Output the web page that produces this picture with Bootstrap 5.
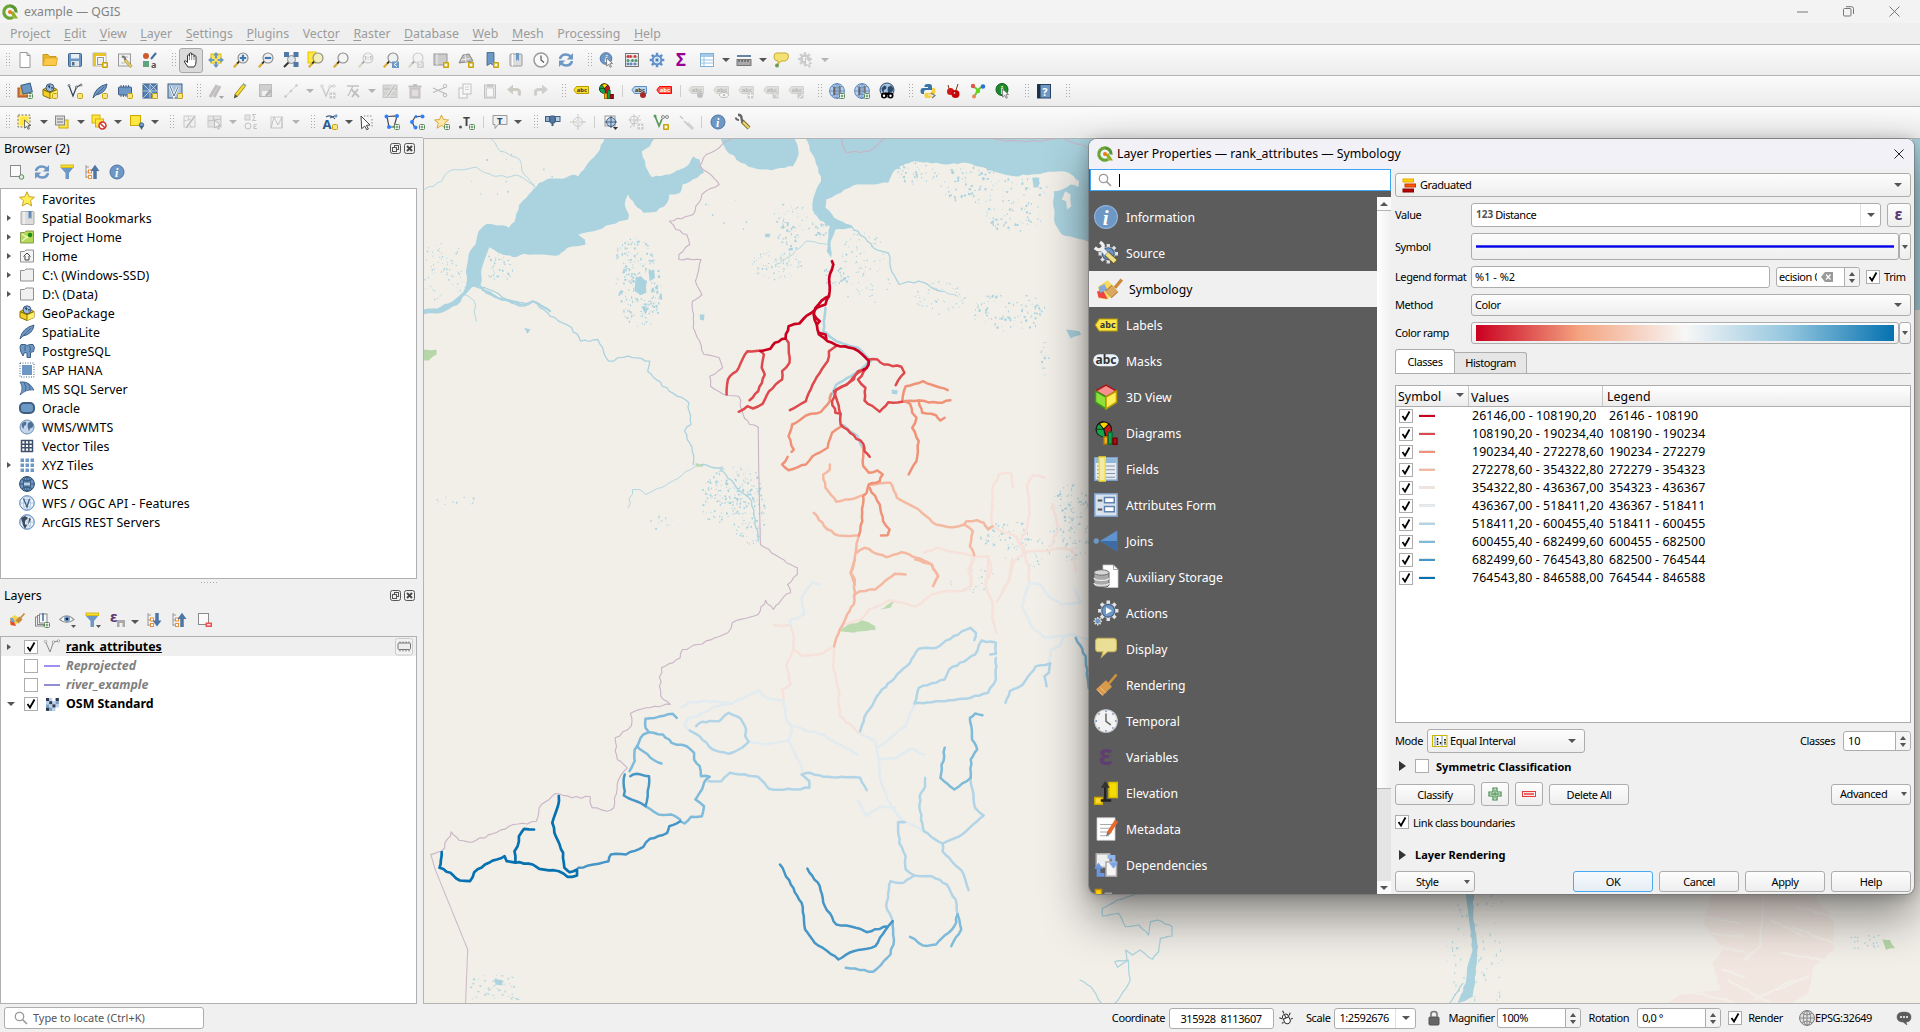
<!DOCTYPE html>
<html lang="en">
<head>
<meta charset="utf-8">
<title>example — QGIS</title>
<link href="https://cdn.jsdelivr.net/npm/bootstrap@5.3.0/dist/css/bootstrap.min.css" rel="stylesheet">
<style>
html,body{height:100%;overflow:hidden}
body{font:12.4px/18px "Noto Sans",sans-serif;color:#000;background:#f0f0f0;cursor:default}
svg{display:block;flex:none}
svg.ic{width:16px;height:16px;overflow:visible}
.titlebar{height:23px;background:#f3f3f3;color:#838383;padding-left:2px;font-size:12.2px}
.winbtns{gap:35px;padding-right:20px;color:#777}
.menubar{height:21px;padding-left:10px;gap:13.5px;color:#9b9b9b;line-height:22px;background:#efefef}
.menubar u{text-underline-offset:2px}
.tbar{height:31px;border-top:1px solid #b4b4b4;background:linear-gradient(#fbfbfb,#ececec)}
.tb{width:25px;height:25px}
.tb.on{border:1px solid #a9a9a9;border-radius:3px;background:#dadada;width:24px;margin-right:1px}
.dim{opacity:.4;filter:grayscale(.75)}
.grip{width:16px;padding-right:3px}
.grip.first{width:12.5px}
.grip i{width:5px;height:16px;background:radial-gradient(circle,#aaa 0 .7px,transparent .9px) 0 0/3px 3px}
.sepr{width:7.5px}.sepr i{width:1px;height:12px;background:#cfcfcf}
.caret{width:12.2px}
.tri{width:0;height:0;border:4px solid transparent;border-bottom:0;border-top:4px solid #555}
.tri.up{border:4px solid transparent;border-top:0;border-bottom:4px solid #555}
.tri.sm{border-left-width:3.5px;border-right-width:3.5px}
.tri.rt{border:3.5px solid transparent;border-right:0;border-left:4px solid #555}
.tri.big{border-width:5px 0 5px 7px;border-left-color:#333}
.leftdock{width:423px;padding-right:6px;border-top:1px solid #b4b4b4}
.dockhead{height:22px;padding:0 0 0 4px}
.dockhead svg{margin-right:-1.5px}
.docktools{height:28px;padding-left:4px}
.listbox{background:#fff;border:1px solid #b0b0b0}
.trow{height:19px;line-height:19px}
#browserTree{letter-spacing:.08px}
.twist{width:18px;padding-left:6px}
.docktools .tb{height:24px}
.ck{width:14px;height:14px;border:1px solid #adadad;background:#fff;flex:none}
.mapwrap{border:1px solid #b4b4b4;border-right:0;margin-top:1px;background:#f2efe9}
.form11,.statusbar{font-size:11px;letter-spacing:-.42px;line-height:14px}
.statusbar{height:28px;padding-right:8px}
.fld{background:#fff;border:1px solid #adadad;border-radius:3px;flex:none}
.pbtn{background:linear-gradient(#fdfdfd,#eee);border:1px solid #adadad;border-radius:3px;color:#000;flex:none;white-space:nowrap}
.spinner{width:15px;border-left:1px solid #adadad;gap:3px;background:#f4f4f4;border-radius:0 3px 3px 0}
.dialogwin{position:absolute;left:1089px;top:139px;width:825px;height:755px;border-radius:8px;background:#f0f0f0;box-shadow:0 0 0 1px rgba(110,110,110,.55),0 22px 46px 2px rgba(0,0,0,.42),0 2px 14px rgba(0,0,0,.22);overflow:hidden}
.dlgtitle{height:30px;background:#f3f1f8;padding:0 10px 0 8px;font-size:12.3px;flex:none}
.side{width:302px;background:#5c5c5c}
.searchbox{height:22px;border:1px solid #3fa5f5;background:#fff;margin-left:1px;padding-left:6px;flex:none}
.navs{width:288px;padding-top:8px}
.navitem{height:36px;color:#fff;padding-left:5px;font-size:12.2px}
.navitem svg{width:24px;height:24px;overflow:visible}
.navitem.sel{background:#f0f0f0;color:#000;padding-left:8px}
.navitem.sel svg{margin-top:2px}
.scroller{width:14px;margin-top:6px;background:#e4e4e4}
.scroller .h{height:578px;background:linear-gradient(90deg,#fff,#f0f0f0);border-bottom:1px solid #b5b5b5}
.scroller .b{height:14px;background:#fafafa;border-bottom:1px solid #b5b5b5}
.pane{padding:4px 3px 0 4px}
.lbl{width:76px;flex:none}
.ramp{height:16px;background:linear-gradient(90deg,#ca0020,#f4a582 25%,#f7f7f7 50%,#92c5de 75%,#0571b0)}
.tabon{width:60px;height:24px;background:#fff;border:1px solid #adadad;border-bottom:0;border-radius:3px 3px 0 0}
.taboff{width:72px;height:21px;background:#e6e6e6;border:1px solid #adadad;border-left:0;border-bottom:0;border-radius:0 3px 0 0}
.ctab{height:338px;border:1px solid #adadad;background:#fff;font-size:12.3px;letter-spacing:.1px}
.chead{height:21px;border-bottom:1px solid #adadad;background:linear-gradient(#fff,#ececec)}
.crow{height:18px;line-height:18px}
.c1{width:73px}.c2{width:134px;white-space:nowrap}.chead .c1,.chead .c2{border-right:1px solid #c8c8c8}
.lsw{width:16px;height:2px;box-shadow:0 -1px 0 rgba(200,200,200,.45)}
</style>
<script src="https://cdn.jsdelivr.net/npm/bootstrap@5.3.0/dist/js/bootstrap.bundle.min.js"></script>
</head>
<body>
<div class="d-flex flex-column vh-100">
  <header>
    <div class="titlebar d-flex align-items-center">
      <span data-i="qgis"></span><span class="flex-fill" style="margin-left:6px">example — QGIS</span>
      <div class="winbtns d-flex align-items-center">
        <svg width="11" height="11"><path d="M0 6h11" stroke="#777"/></svg>
        <svg width="11" height="11" fill="none" stroke="#777"><rect x=".5" y="2.5" width="7.5" height="7.5" rx="1"/><path d="M3 .7h5.500q2 0 2 2V8"/></svg>
        <svg width="11" height="11"><path d="M.5.500l10 10M10.500.500l-10 10" stroke="#777"/></svg>
      </div>
    </div>
    <nav class="menubar d-flex">
      <span>Pro<u>j</u>ect</span><span><u>E</u>dit</span><span><u>V</u>iew</span><span><u>L</u>ayer</span><span><u>S</u>ettings</span><span><u>P</u>lugins</span><span>Vect<u>o</u>r</span><span><u>R</u>aster</span><span><u>D</u>atabase</span><span><u>W</u>eb</span><span><u>M</u>esh</span><span>Pro<u>c</u>essing</span><span><u>H</u>elp</span>
    </nav>
    <div class="tbar d-flex align-items-center" data-tools="[ new open save layout layoutmgr style | pan! pansel zin zout zfull zsel zlayer znative~ zlast znext~ newmap new3d bkm showbm clock refresh | ident abacus gear sigma table v measure v tip searchact~ v~"></div>
    <div class="tbar d-flex align-items-center" data-tools="[ dsm gpkgb vlayer featherb chipb meshb virt | pens~ pencil saveed~ line~ v~ addv~ vtool~ v~ multi~ trash~ cut~ copy~ paste~ undo~ redo~ | abcy diag - abcpin abcred - lab1~ lab2~ lab3~ lab4~ lab5~ | globe1 globe2 globe3 | python cherry graph infog | help |"></div>
    <div class="tbar d-flex align-items-center" data-tools="[ selrect v selval v desel v selloc v | g1~ g2~ v~ g3~ g4~ v~ | anno v arrowsel poly pline star textp - tbub v | gps target~ - snap snapadd~ vtopo trace~ - info wrench"></div>
  </header>

  <div class="d-flex flex-fill" style="min-height:0">
    <aside class="leftdock d-flex flex-column">
      <div class="dockhead d-flex align-items-center"><span class="flex-fill">Browser (2)</span><span data-i="float"></span><span data-i="closex"></span></div>
      <div class="docktools d-flex" data-tools="addlay refresh filter collapse info"></div>
      <div class="listbox" id="browserTree" style="height:391px"></div>
      <div class="d-flex justify-content-center" style="height:8px"><i style="width:17px;height:3px;margin-top:2px;background:radial-gradient(circle,#aaa 0 .7px,transparent .9px) 0 0/3px 3px"></i></div>
      <div class="dockhead d-flex align-items-center pb-1" style="height:21px"><span class="flex-fill">Layers</span><span data-i="float"></span><span data-i="closex"></span></div>
      <div class="docktools d-flex" data-tools="brush addgrp eye filterv epsf v expand collapse remlay"></div>
      <div class="listbox flex-fill pt-0">
        <div class="trow d-flex align-items-center fw-bold" style="background:#efefef"><span class="twist"><i class="tri rt d-block"></i></span><span style="margin-left:5px"></span><span data-ck="1"></span><span style="margin-left:6px" data-i="vline"></span><u class="flex-fill" style="margin-left:6px">rank_attributes</u><span class="me-1" data-i="mem"></span></div>
        <div class="trow d-flex align-items-center fw-bold fst-italic" style="color:#808080"><span class="twist"></span><span style="margin-left:5px"></span><span data-ck="0"></span><i style="width:16px;height:2px;background:#9e8ff0;margin:0 6px"></i>Reprojected</div>
        <div class="trow d-flex align-items-center fw-bold fst-italic" style="color:#808080"><span class="twist"></span><span style="margin-left:5px"></span><span data-ck="0"></span><i style="width:16px;height:2px;background:#8f8fd2;margin:0 6px"></i>river_example</div>
        <div class="trow d-flex align-items-center fw-bold"><span class="twist"><i class="tri d-block"></i></span><span style="margin-left:5px"></span><span data-ck="1"></span><span style="margin-left:6px" data-i="raster"></span><span style="margin-left:6px">OSM Standard</span></div>
      </div>
    </aside>
    <main class="mapwrap flex-fill overflow-hidden">
      <svg id="map" width="1497" height="865" viewBox="424 139 1497 865"></svg>
    </main>
  </div>

  <footer class="statusbar d-flex align-items-center">
    <div class="fld d-flex align-items-center ms-1 ps-2" style="width:200px;height:22px;color:#555;letter-spacing:-.05px"><span data-i="mag"></span><span class="ps-1">Type to locate (Ctrl+K)</span></div>
    <span class="ms-auto">Coordinate</span>
    <span class="fld ms-1 ps-2" style="width:105px;height:21px;line-height:19px">&nbsp;315928&nbsp; 8113607</span>
    <span class="ms-1" data-i="toggle"></span><span class="ms-2 ps-1">Scale</span>
    <span class="fld d-flex align-items-center ms-1 ps-1" style="width:82px;height:21px"><span class="flex-fill">1:2592676</span><span class="h-100 d-flex align-items-center justify-content-center border-start" style="width:20px"><i class="tri"></i></span></span>
    <span style="margin-left:10px" data-i="lock"></span><span style="margin-left:6px">Magnifier</span>
    <span class="fld d-flex ps-1" style="width:84px;height:20px;line-height:18px;margin-left:2px"><span class="flex-fill">100%</span><span data-spin></span></span>
    <span class="ms-2">Rotation</span>
    <span class="fld d-flex ms-2 ps-1" style="width:84px;height:20px;line-height:18px"><span class="flex-fill">0,0 °</span><span data-spin></span></span>
    <span style="margin-left:7px" data-ck="1"></span><span style="margin-left:6px">Render</span>
    <span class="ms-3" data-i="globeg"></span><span>EPSG:32649</span>
    <span class="ms-4" data-i="msg"></span>
  </footer>
</div>

<section class="dialogwin d-flex flex-column">
  <div class="dlgtitle d-flex align-items-center"><span data-i="qgis"></span><span class="ms-1 flex-fill">Layer Properties — rank_attributes — Symbology</span>
    <svg width="10" height="10"><path d="M.5.500l9 9M9.500.500l-9 9" stroke="#222"/></svg></div>
  <div class="d-flex flex-fill" style="min-height:0">
    <div class="side d-flex flex-column">
      <div class="searchbox d-flex align-items-center"><span data-i="mag"></span><i style="width:1px;height:13px;background:#000;margin-left:6px"></i></div>
      <div class="d-flex flex-fill overflow-hidden" style="min-height:0">
        <div class="navs" id="nav"></div>
        <div class="scroller"><div class="b d-flex align-items-center justify-content-center"><i class="tri up"></i></div><div class="h"></div><div style="height:92px"></div><div class="b d-flex align-items-center justify-content-center"><i class="tri"></i></div></div>
      </div>
    </div>
    <div class="pane form11 flex-fill d-flex flex-column">
      <div class="pbtn d-flex align-items-center pe-2" style="height:24px;padding-left:5px"><span data-i="grad"></span><span class="flex-fill" style="padding-left:3px">Graduated</span><i class="tri"></i></div>
      <div class="d-flex align-items-center" style="margin-top:6px;height:24px"><span class="lbl">Value</span>
        <div class="fld h-100 d-flex align-items-center ps-1" style="width:410px"><b style="color:#555;font-size:10px;letter-spacing:0;margin:-3px 2px 0 0">123</b><span class="flex-fill">Distance</span><span class="h-100 border-start d-flex align-items-center justify-content-center" style="width:20px"><i class="tri"></i></span></div>
        <div class="pbtn h-100 ms-auto d-flex align-items-center justify-content-center" style="width:24px"><span data-i="eps"></span></div></div>
      <div class="d-flex align-items-center" style="margin-top:6px;height:27px"><span class="lbl">Symbol</span>
        <div class="pbtn h-100 d-flex align-items-center px-1" style="width:428px"><i class="w-100" style="height:3px;background:#0000f0;border-top:1px solid #4848e8;border-bottom:1px solid #4848e8"></i></div>
        <div class="pbtn h-100 flex-fill d-flex align-items-center justify-content-center"><i class="tri sm"></i></div></div>
      <div class="d-flex align-items-center" style="margin-top:6px;height:22px"><span class="lbl">Legend format</span>
        <div class="fld h-100 d-flex align-items-center" style="width:299px;letter-spacing:0;padding-left:3px">%1 - %2</div>
        <div class="fld d-flex align-items-center" style="width:84px;height:20px;margin-left:6px;padding-left:2px"><span class="overflow-hidden text-nowrap" style="width:38px">ecision 0</span><span class="flex-fill" style="padding-left:3px" data-i="clr"></span><span class="h-100" data-spin></span></div>
        <span style="margin-left:6px" data-ck="1"></span><span class="ms-1">Trim</span></div>
      <div class="d-flex align-items-center" style="margin-top:6px;height:22px"><span class="lbl">Method</span>
        <div class="pbtn h-100 flex-fill d-flex align-items-center pe-2" style="padding-left:3px"><span class="flex-fill">Color</span><i class="tri"></i></div></div>
      <div class="d-flex align-items-center" style="margin-top:6px;height:22px"><span class="lbl">Color ramp</span>
        <div class="pbtn h-100 d-flex align-items-center px-1" style="width:428px"><div class="ramp w-100"></div></div>
        <div class="pbtn h-100 flex-fill d-flex align-items-center justify-content-center"><i class="tri sm"></i></div></div>
      <div class="d-flex align-items-end border-bottom" style="margin-top:6px;height:24px;border-color:#adadad!important"><div class="tabon d-flex align-items-center justify-content-center">Classes</div><div class="taboff d-flex align-items-center justify-content-center">Histogram</div></div>
      <div class="ctab" style="margin-top:11px">
        <div class="chead d-flex align-items-center"><span class="c1 h-100 d-flex align-items-center justify-content-between" style="padding:1px 4px 0 2px">Symbol<i class="tri mb-1"></i></span><span class="c2 h-100" style="line-height:23px;padding-left:2px">Values</span><span style="padding:1px 0 0 4px">Legend</span></div>
        <div id="classes"></div>
      </div>
      <div class="d-flex align-items-center" style="margin-top:6px;height:24px"><span style="width:32px">Mode</span><div class="pbtn h-100 d-flex align-items-center ps-1 pe-2" style="width:158px"><span data-i="eqint"></span><span class="flex-fill" style="padding-left:2px">Equal Interval</span><i class="tri"></i></div>
        <span class="ms-auto">Classes</span><div class="fld d-flex ms-2 ps-1" style="width:68px;height:20px;line-height:18px;letter-spacing:0"><span class="flex-fill">10</span><span data-spin></span></div></div>
      <div class="d-flex align-items-center fw-bold" style="margin-top:5px;height:16px;letter-spacing:.02px"><i class="tri rt big ms-1"></i><span style="margin-left:9px" data-ck="0"></span><span style="margin-left:7px;padding-top:1px">Symmetric Classification</span></div>
      <div class="d-flex align-items-center" style="margin-top:8px;height:24px;gap:6px"><div class="pbtn text-center" style="width:80px;height:21px;line-height:19px">Classify</div><div class="pbtn h-100 d-flex align-items-center justify-content-center" style="width:28px"><span data-i="plus"></span></div><div class="pbtn h-100 d-flex align-items-center justify-content-center" style="width:28px"><span data-i="minus"></span></div><div class="pbtn text-center" style="width:80px;height:21px;line-height:19px">Delete All</div><div class="pbtn d-flex align-items-center justify-content-between ms-auto" style="width:80px;height:21px;padding:0 3px 0 8px">Advanced<i class="tri sm"></i></div></div>
      <div class="d-flex align-items-center" style="margin-top:9px;height:14px"><span data-ck="1"></span><span class="ms-1" style="padding-top:1px">Link class boundaries</span></div>
      <div class="d-flex align-items-center fw-bold" style="margin-top:18px;height:16px;letter-spacing:.02px"><i class="tri rt big ms-1"></i><span style="margin-left:9px">Layer Rendering</span></div>
      <div class="d-flex align-items-center" style="margin-top:8px;height:21px;gap:6px;line-height:19px"><div class="pbtn d-flex align-items-center justify-content-between me-auto h-100" style="width:80px;padding:0 4px 0 20px">Style<i class="tri sm"></i></div><div class="pbtn text-center h-100" style="width:80px;border-color:#4aa8f0;background:linear-gradient(#f6fafd,#e6eef4)">OK</div><div class="pbtn text-center h-100" style="width:80px">Cancel</div><div class="pbtn text-center h-100" style="width:80px">Apply</div><div class="pbtn text-center h-100" style="width:80px">Help</div></div>
    </div>
  </div>
</section>

<script>
/* ---------- icons, drawn on a 16 x 16 grid ---------- */
const B='#6d97c4',BD='#3f5f82',G='#888';
const S=(d,c,w=1,f='none')=>`<path d="${d}" fill="${f}" stroke="${c}" stroke-width="${w}"/>`;
const F=(d,c)=>`<path d="${d}" fill="${c}"/>`;
const C=(x,y,r,f,s='none',w=1)=>`<circle cx="${x}" cy="${y}" r="${r}" fill="${f}" stroke="${s}" stroke-width="${w}"/>`;
const R=(x,y,w,h,f,s='none',rx=0)=>`<rect x="${x}" y="${y}" width="${w}" height="${h}" fill="${f}" stroke="${s}" rx="${rx}"/>`;
const T=(t,x,y,s,f,x2='')=>`<text x="${x}" y="${y}" font-size="${s}" fill="${f}" letter-spacing="0" font-family="Noto Sans" ${x2}>${t}</text>`;
const yb=R(10.5,10.5,5,5,'#f6e58a','#c4a000',1), gb=R(10.500,10.500,5,5,'#fff','#5a8c5a',1)+S('M13 11.500v3M11.500 13h3','#5a8c5a'),
 sb=R(10,10,6,6,'#c8a40a','none',1)+S('M13 11v4M11 13h4M11.700 11.700l2.600 2.600M14.300 11.700l-2.600 2.600','#fff',.8);
const mag=(f='#eef1f2')=>S('M.8 15.200L4.800 11','#d8ab32',2.200)+S('M4.300 11.500L6.500 9','#222',1.800)+C(10,6,5,f,'#8a8a8a',1.100);
const globe=(f,s)=>C(8,8,7.400,f,s)+S('M.8 8h14.400M8 .8v14.400M3 3.500q5 3 10 0M3 12.500q5-3 10 0',s,.8)+`<ellipse cx="8" cy="8" rx="3.600" ry="7.200" fill="none" stroke="${s}" stroke-width=".8"/>`;
const land=(f)=>F('M2.500 5l3-2.500 2 1-.5 2.500-2 1-.5 3-1.500-2zM9 4l3-1.500 2.500 3-1 3-2.500 1-1 3-1-3.500L8.500 7z',f);
const gearp=(c,cx,cy,r)=>{let o='';for(let k=0;k<8;k++){const a=k*Math.PI/4;o+=`M${cx+Math.cos(a)*r*.6} ${cy+Math.sin(a)*r*.6}L${cx+Math.cos(a)*r} ${cy+Math.sin(a)*r}`}return S(o,c,r*.34)+C(cx,cy,r*.72,c)};
const curs='M7.500 6l6 5.500-2.600.2 1.500 3-1.300.600-1.400-3-2 1.800z';
const vee=S('M2 3.500L6 13 10 3.500 14 3',G,1.300)+C(2,3,1.300,'#fff',G,.8)+C(10,3.500,1.200,'#fff',G,.8)+C(14,3,1.200,'#fff',G,.8);
const tag=(f,s,c)=>S('M3.500 3.500h12v7h-12L.8 7z',s,1,f)+T('abc',3.800,9,5.800,c,'font-weight="bold"');
const feather=S('M1 15Q3 4 15 1 14 10 4 12',BD,1,B)+S('M1 15L12 4',BD,.8);
const folder=(f,s)=>S('M1.500 3.500h4l1.500-1.500h7.500v12h-13z',s,1,f);
const sy=['#fff08c','#e8c700'];
const funnel=F('M1.500 3.500h13L10 9v6H6.500V9z',B)+R(2,1,12.500,2.500,'#f7dd3c','#d9bc10');
const gpkg=S('M1 6.500l7-3.500 7 3.500v6L8 15.500 1 12.500z','#8a7000',1,'#f2cf25')+F('M8 9.500l7-3v6L8 15.500z','#fff06a')+C(8,4.800,4,'#9dbbe0','#3a5878')+F('M5.500 3l2-1 1 1.500-1 2zM9 4l2 0-1 3z','#2c4a6b')+S('M1 6.500l7 3 7-3','#8a7000',1.200)+S('M8 9.500v6','#8a7000',.9);
const I={
qgis:S('M8 1.800a6.200 6.200 0 1 0 3 11.600',"#6aa636",3.200)+S('M8 1.800a6.200 6.200 0 0 1 6.100 6.700','#589632',3.200)+F('M8 8l3.500-.5 4.500 7h-4z','#93b023')+C(8,8,2,'#ee7913'),
new:S('M3 .5h7l3 3v12H3z','#999',1,'#fff')+S('M10 .5v3h3','#999'),
open:S('M1 13.500V2.500h5l1.500 2H14v9z','#c99a1a',1,'#e9b52e')+S('M1 13.500L3 6h12.500l-1.500 7.500z','#d9a520',.8,'#fbc94c'),
save:R(1.500,1.500,13,13,B,'#44648a',1)+R(4,2,8,4.500,'#e8eef4')+R(4,9,8,5.500,'#dfe6ec')+R(5,10,2.500,3.500,'#5a6c80'),
layout:S('M1 1h13v13H1z','#aaa',.8,'#fff')+F('M1 1h13v3H4v10H1z','#e9c428')+R(5.500,5.500,6,7,'#eee','#999')+sb,
layoutmgr:R(1.500,2,12,12,'#f2f2f2','#999')+S('M4 5h7M4 11h4','#bbb')+S('M8 8l6.500 7','#a08a40',3)+S('M8 8l6.500 7','#e2c96a',2)+S('M5 4.500q3.500 0 3 3.500','#777',2.200),
style:C(4,4,3,'#cf5a2c')+S('M9 7l5-6','#3f6ea0',2)+R(1,9,6,6,'#5fa37f')+T('a',9,15.500,9,'#555','font-weight="bold"'),
pan:S('M5 15l-3.500-5q-.5-1.500 1-1.200L4.500 10.500V4q0-1.200 1-1.200T6.500 4V2q.1-1.200 1.100-1.200T8.700 2v1q.2-1 1.200-.9T11 3.200V4.500q.1-.9 1-.9t1 1V10q0 3-2 5z','#333',1,'#fff')+S('M6.500 4v4M8.700 3v5M11 4v4','#555',.7),
pansel:R(3,2,10,9,'#ffe95a','#d8bd00')+F('M8 0l3 3.500H5zM8 16l3-3.500H5zM0 8l3.500-3v6zM16 8l-3.500-3v6z',B)+S('M8 2v12M2 8h12',B,2.200)+C(8,8,1.800,'#ffe95a'),
zin:mag()+S('M10 2.800v6.400M6.800 6h6.400','#3f78b0',2.200), zout:mag()+S('M6.800 6h6.400','#3f78b0',2.200),
zfull:S('M1 15l6-6','#333',2)+C(8.500,7.500,4,'#dfe5ea',G)+F('M1 0h5.500L1 5.500zM15.500 0v5.500L10 0zM15.500 15H10l5.500-5.500zM1 1h5v4H1zM10.500 1h5v4h-5zM10.500 10h5v5h-5z','#4f78a8'),
zsel:R(0,0,8,11,'#ffe640','#e2c800')+mag('#f2eeb8'), zlayer:mag('#f4f4f2'), znative:mag()+T('1:1',5.800,8.200,6,'#555','font-weight="bold"'),
zlast:mag()+R(9,9.500,7,6.500,B)+S('M14 10.500l-3 2 3 2','#fff'), znext:mag()+R(9,9.500,7,6.500,'#aaa')+S('M11 10.500l3 2-3 2','#fff'),
newmap:R(1,2,13,11,'#ccc','#999')+S('M4 2v11','#eee')+sb, new3d:S('M1 11l4-8 6-1 4 7z','#888',1,'#bbb')+S('M3 8l9-1.500M7 2.500L8 10','#eee')+sb,
bkm:S('M4 .5h7v13l-3.500-2L4 13.500z',BD,.8,B)+sb, showbm:R(2,2,12,12,'#dcdcdc','#9a9a9a',1)+S('M4.500 2v12','#fff')+F('M8 1h3v8L9.500 7.500 8 9z',B),
clock:C(8,8,7,'#fbfbfb','#9a9a9a',1.500)+S('M8 3.500V8l3 2.500','#555',1.200),
refresh:S('M2 7Q3 2.500 8 2.500q3 0 5 2.500',B,2.600)+F('M15 1v6.500H8.800z',B)+S('M14 9q-1 4.500-6 4.500-3 0-5-2.500',B,2.600)+F('M1 15V8.500h6.200z',B),
ident:C(7,6.500,5.800,B,'#4d76a5')+T('i',5.600,10,9.500,'#fff','font-weight="bold" font-style="italic"')+S(curs,'#777',.9,'#fff'),
abacus:R(1.500,1.500,13,13,'#eee','#777')+S('M2 5h12M2 9h12M2 12h12','#999',.8)+[4,6.500,11].map(x=>C(x,4.500,1.400,'#d43b3b')).join('')+[4,8.500,12].map(x=>C(x,8.500,1.400,'#4c9a78')).join('')+[4,7,11].map(x=>C(x,12,1.400,'#5f8cbc')).join(''),
gear:gearp('#5f8fc8',8,8,7.300)+C(8,8,3,'#a9c8e8','#fff',.8)+C(8,8,1.200,'#4a78ae'),
sigma:T('Σ',2,14,17,'#980098','font-weight="bold"'),
table:R(1.500,1.500,13,13,'#fff','#7fb0d6')+R(2,2,12,3,'#a5c9e6')+S('M2 8h12M2 11h12M5 5v9','#9cc3e2'),
measure:S('M1 4h14','#345f8c',1.500)+R(1,7.500,14,6,'#aaa','#777')+S('M3 8v2M6 8v2M9 8v2M12 8v2','#444'),
tip:S('M3 1h10q2.500 0 2.500 3.500T12 9H8l-3 3.500V9Q1 9 1 5t2-4z','#c9ab2e',1,'#f4e176')+C(4,13.500,2,'#6f9b52'),
searchact:gearp('#999',7,7,7)+C(7,7,3,'#eee','#777')+S(curs,'#777',.9,'#fff'),
dsm:R(1,5,9,9,'#d57a3a','#a85220')+R(3,3,9,9,'#e8b04a')+`<g transform="rotate(-14 10 6)">${R(5,1,9.500,9,B,BD)}</g>`+gb,
gpkg,gpkgb:gpkg+yb,
vlayer:S('M2 2.500L6 13 9.500 4 14 2','#345',1.200)+C(2,2.500,1,'#fff','#345',.7)+C(9.500,4,1,'#fff','#345',.7)+C(14,2,1,'#fff','#345',.7)+yb,
feather, featherb:feather+yb, chipb:S('M4 2v12M6.500 2v12M9 2v12M11.500 2v12',BD,.9)+R(1.500,4,13,8,B,BD,1)+yb,
meshb:R(1,1,14,14,'#557fae',BD)+S('M1 8h14M8 1v14M1 1l14 14M15 1L1 15M8 1l7 7','#c9daec',.8)+yb,
virt:R(1,1,14,14,'#a9c3de',BD)+S('M3 3l4 10 4-9','#fff',2.500)+S('M3 3l4 10 4-9',BD,.9)+yb,
pens:S('M2 14L9 2M6 14l6-11','#8a6f6f',3)+F('M11 13h5l-2.500 3z','#333'), pencil:S('M3 12.500L11 2.500','#a38b10',3.800)+S('M3 12.500L11 2.500','#f5dc3d',2.200)+F('M.8 15.500l1-4.500 3 2.500z','#5a5030')+S('M11 2.500l1-1.300','#8aa',3.800),
saveed:R(1.500,1.500,12,12,'#999','#666')+R(4,8,7,5,'#eee')+S('M8 13l5-6','#555',2.500), line:S('M2 14L14 2','#888',.8)+C(2.500,13.500,1.300,G)+C(8,8,1.300,G)+C(13.500,2.500,1.300,G),
addv:vee+R(9.500,9.500,6,6,'#999')+S('M12.500 10v5M10 12.500h5','#fff'), vtool:S('M2 3h6L3 13M8 3h6','#777',1.300)+S('M6 6l8 8M13 6l-6 8','#777',2),
multi:R(1,2,14,3.500,'#b5a88c',G)+R(1,6.500,14,3.500,'#b5b58c',G)+R(1,11,14,3.500,'#b5b58c',G)+S('M5 14L13 2','#fff',3)+S('M5 14L13 2','#777',1.800), trash:R(3,5,10,10,'#b88','#966')+S('M1.500 3.500h13M6 2h4','#966',2)+S('M6 7v6M8 7v6M10 7v6','#eee'),
cut:S('M1 5l13 6M1 9.500L14 4','#666',1.200)+C(13,3,1.800,'none','#666')+C(13,12,1.800,'none','#666'),
copy:R(2,5,8,10,'#fff','#777')+R(6,1,8,10,'#fff','#777')+S('M8 4h4M8 6.500h4','#999'), paste:R(2.500,2,11,13,'#ccc','#777')+R(4.500,5,7,9,'#fff','#999')+R(5,1,6,3,'#888'),
undo:S('M4 6.500h6q4 1 2 6','#a89048',3)+F('M0 6.500l6-5v10z','#a89048'), redo:S('M12 6.500H6Q2 7.500 4 12.500','#8aa07a',3)+F('M16 6.500l-6-5v10z','#8aa07a'),
abcy:tag('#f7e02e','#b99a00','#333'),
diag:S('M6.500 5.500V.6A5 5 0 0 0 3 9.200z','#111',.7,'#12a84a')+S('M6.500 5.500L3.500 1.800A5 5 0 0 1 10 2z','#111',.7,'#ffd400')+S('M6.500 5.500L10 2a5 5 0 0 1-2 8.500z','#111',.7,'#c01818')+S('M6.500 5.500l-5 0A5 5 0 0 0 7.500 10.500z','#111',.5,'#12a84a')+R(6.500,10.500,2.600,5,'#f3b21c','#a37000')+R(9.500,7.500,2.600,8,'#12a050','#0b6a33')+R(12.700,11.500,2.600,4,'#b01212','#700'),
abcpin:tag('#bcd6f2','#5a8fc8','#333')+C(12,12,3,'#a82828'), abcred:tag('#ff5a50','#f00','#fff'),
lab1:tag('#c5c09a','#a5a27c','#555')+C(12,12,3,'#777'),lab2:tag('#c5c09a','#a5a27c','#555')+`<ellipse cx="11" cy="12" rx="4.500" ry="2.500" fill="#fff" stroke="#777"/>`+C(11,12,1.200,'#777'),lab3:tag('#c5c09a','#a5a27c','#555')+R(9.500,9.500,6,6,'#999')+S('M12.500 10v5M10 12.500h5','#fff'),lab4:tag('#c5c09a','#a5a27c','#555')+R(9.500,9.500,6,6,'#999')+S('M11 11q4 0 3 3','#fff'),lab5:tag('#c5c09a','#a5a27c','#555')+R(9.500,9.500,6,6,'#999')+S('M11 15l4-4','#fff'),
globe1:globe('#b5d0f0','#5f87b8')+R(4.500,4,2,8,'#666')+R(9.500,3,2,9,'#777')+gb, globe2:globe('#b5d0f0','#5f87b8')+R(4.500,4,2,8,'#666')+R(9.500,3,2,7,'#777')+gb,
globe3:C(8,7,7,'#a9c3de','#2c4a6b')+land('#2c4a6b')+C(5,12.500,3,'#000')+C(11.500,12.500,3,'#000')+R(6,9.500,4,2.500,'#000')+C(5,12.800,1.200,'#fff')+C(11.500,12.800,1.200,'#fff'),
python:F('M7.500 1h2q2.500 0 2.500 2.500V7H6Q4 7 4 9v2H2.500Q.5 11 .5 8T3 5h5V4H4.500V3q0-2 3-2z','#3a75a8')+F('M8.500 15h-2Q4.500 15 4.500 12.500V10h5q2.500 0 2.500-2V5h1.500q2 0 2 3T13 11.500H8v1h3.500v.8q0 1.700-3 1.700z','#f5cf3c')+S('M11 10l4 2.500-3 2.500','#777',1.200),
cherry:S('M5 9L3 2M10 10L13 1','#7a3a10')+C(5.500,8.500,3.500,'#d01818')+C(10.500,11,4,'#c00808')+C(9.500,10,.8,'#fff'),
graph:S('M3 3l5 4 5-4.500M8 7l-4 7','#6c3',2)+C(3,3,2.200,'#e2554c')+C(13,3.500,2.200,'#2d6fe0')+C(8,8,2.200,'#63d61a')+C(4,13.500,2,'#e88a55'),
infog:C(7,6.500,6,'#1d8a28','#0d5c16')+T('i',5.400,10.500,10.500,'#fff','font-weight="bold"')+S(curs,'#777',.9,'#fff'),
help:R(1.500,1.500,13,13.500,B,'#27405c')+R(1.500,1.500,3,13.500,'#1d2f45')+T('?',6.300,12.500,11,'#fff','font-weight="bold"'),
selrect:R(1,1,12,12,sy[0],'#777').replace('/>',' stroke-dasharray="2 1.500"/>')+R(3,3,8,8,'#ffe640')+S(curs,'#555',.9,'#fff'),
selval:R(5,6,9,8,'#ffe640','#c9a900')+R(1.500,2,9,9,'#ddd','#888')+S('M3 5h6M3 8h6','#777'),
desel:R(1,1,8,8,'#ffe640','#d9b200')+R(4.500,5,8,8,'#ffe640','#d9b200')+C(11.500,11.500,3.500,'#fff','#d83030',1.500)+S('M9.200 9.200l4.600 4.600','#d83030',1.500),
selloc:R(1.500,1.500,10,10,'#ffe640','#c9a900')+C(12.500,11,2.300,B,BD,.8)+F('M10.500 12h4l-2 4z',BD),
g1:R(2,2,11,11,'#eee',G)+S('M2 7l11-3M6 2l3 11','#777',.8)+S('M4 14L13 2','#fff',3)+S('M4 14L13 2','#866',1.800), g2:R(1,2,13,11,'#ccc',G)+S('M1 7l13-2M6 2l3 11','#777')+S(curs,'#555',.9,'#fff'),g3:R(1,1,5,5,'#ccc',G)+T('Σ',8,7,8,'#555')+T('ε',9,15,9,'#555')+C(4,12,3,'none','#777'),g4:R(2,3,11,11,'none',G)+S('M2 14L5 3l4 8 4-8v11','#777'),
anno:T('A',.5,14.500,13,'#2c5a92','font-weight="bold"')+S('M4 3q5-3 9 2M8 4l7-3',BD,1.200)+C(14,2,1.500,B)+yb,
arrowsel:S('M2 2l9 9-3.600.3 2 3.700-1.700.7-2-3.600-3 2.600z','#444',1,'#fff')+S('M5 2h9M13 5v9','#888',1).replace('/>',' stroke-dasharray="1.500 1.500"/>'),
poly:S('M3 2.500l10-.5-3 11-5 0z','#444',1.200)+C(2.500,2.500,2,'#2f7fff')+C(13,2,2,'#2f7fff')+C(5,13,2,'#2f7fff')+gb, pline:S('M13 2L6 3 3 8l3 6','#444',1.200)+C(13.500,2.500,2,'#2f7fff')+C(3,8,2,'#2f7fff')+C(6.500,13.500,2,'#2f7fff')+C(7,2.500,1.500,'#2f7fff')+gb,
star:S('M7.500 1l2 4.500 5 .5-3.800 3.200 1.200 5-4.400-2.700L3 14.200l1.300-5L.5 6l5-.5z','#d7a640',1,'#ffe7a8')+gb,
starf:S('M8 .8l2.200 4.900 5.300.5-4 3.500 1.200 5.300L8 12.200 3.300 15l1.200-5.300-4-3.500 5.300-.5z','#c9a227',1,'#ffee58'),
textp:C(1.500,13,1.500,'#555')+T('T',4,12,12,'#444','font-weight="bold"')+gb, tbub:S('M1 1.500h14v9H6l-3 4v-4H1z','#999',1,'#eef1f4')+T('T',5,9.800,9.500,'#345','font-weight="bold"'),
gps:R(5,2,5,7,'#56789f',BD,1)+R(.5,2.500,4,5,'#8fb0d4',BD)+R(10.500,2.500,4.500,5,'#b9cfe6',BD)+S('M7.500 9v3',BD,2), target:C(8,8,4.500,'none','#888')+S('M8 0v16M0 8h16','#888')+R(6,6,4,4,'#ccc'),
snap:R(2,2,10,10,'none','#999')+C(8,8,4.500,'#b9cfe6',BD)+S('M8 2v12M2 8h12',BD)+F('M10 13h5l-2.500 3z','#333'), snapadd:C(6,6,4,'none',G)+S('M6 0v13M0 6h13M2 14L12 1',G)+R(9.500,9.500,6,6,'#999')+S('M12.500 10v5M10 12.500h5','#fff'),
vtopo:S('M2 2l4 10 3-7','#5a9a5a',1.800)+C(2,2,1.500,'#5a9a5a')+C(10,3,1.500,'none',G)+C(14,3,1.500,'none',G)+sb, trace:S('M2 2l3 3M6 7l5 5',G,1.500)+S('M9 9l6 6','#a99',3),
info:C(8,8,7,B,'#4d76a5')+T('i',6,12.500,12,'#fff','font-weight="bold" font-style="italic" style="font-family:Liberation Serif"'),
wrench:S('M7 7l7 7','#7a6420',4)+S('M7.500 7.500l6.300 6.300','#e8d26a',2.400)+S('M3 .8q3.500.2 3.500 3T8 8','#666',2.400)+S('M.8 3.500Q1 6 4 6','#666',2),
addlay:R(1.500,1.500,10,11,'#fbfbfb','#8a8a8a')+C(12.500,13,2.300,'#dfeedd','#5a8c5a'), remlay:R(2.500,1.500,10,11,'#fbfbfb','#8a8a8a')+R(9.500,10.500,6.500,4.500,'#f05050')+S('M11 12.800h3.500','#fff',1.200),
filter:funnel, filterv:funnel+F('M12 13h5l-2.500 3z','#555'),
collapse:S('M2 1v13M2 3h3M2 8h3M2 13h3','#999')+R(4.500,6,3,3,'#fff','#e8913a')+R(4.500,11.500,3,3,'#fff','#e8913a')+S('M11 15V6','#4d76a5',3.500)+F('M6.500 7L11 .8 15.500 7z','#4d76a5'),
expand:S('M2 1v13M2 3h3M2 8h3M2 13h3','#999')+R(4.500,6,3,3,'#fff','#e8913a')+R(4.500,11.500,3,3,'#fff','#e8913a')+S('M11 1v9','#4d76a5',3.500)+F('M6.500 8.500L11 14.500 15.500 8.500z','#4d76a5'),
brush:F('M1 6l5-3 5 4-5 7-5-1z','#f5d54a')+F('M1 9l3-1 3 6-5-1z','#e34848')+F('M1 6l3 0 2 4-4 0z','#7a9fd0')+S('M8 10l4-4','#c98b3c',4.500)+S('M11 6.500l4.500-5','#c98b3c',1.800),
addgrp:R(1.500,5,8,9,'#eee','#888')+R(3.500,3.500,8,9,'#eee','#888')+R(5.500,2,7.500,9,'#f8f8f8','#888')+S('M9 1v8','#3f6ea0',1.500)+gb,
eye:S('M.8 7.500Q7.500 0 15 7.500 7.500 13.500.8 7.500z','#999',1.200,'#fff')+C(8,7,3,'#6d97c4')+C(8,7,1.300,'#123')+F('M12 13h5l-2.500 3z','#555'),
epsf:T('ε',1,9.500,15,'#5a3a70','font-weight="bold"')+F('M8 8h8v7h-2.500v-4h-3v4H8z','#aaa'),
float:R(2.500,2.500,10,10,'none','#555',2)+R(6.500,4.500,4,4,'none','#555')+R(4.500,6.500,4,4,'#f0f0f0','#555'),
closex:R(2.500,2.500,10,10,'none','#555',2)+S('M5 5l5 5M10 5l-5 5','#444',1.800),
vline:S('M1.500 2.500L6 13 9.500 3 14 2',G,1)+C(1.500,2.500,1.200,'#fff',G,.7)+C(9.500,3,1.200,'#fff',G,.7)+C(14.500,2,1.200,'#fff',G,.7),
mem:R(-.5,-.5,17,16.500,'#f2f2f2','#ccc',2)+S('M4 2.500v10M7 2.500v10M10 2.500v10M13 2.500v10','#777')+R(2,4,12.500,6.500,'#eee','#777',1),
raster:(()=>{let o='';const k=['#2b3a52','#b9d0ea','#fff','#7d9fc8'];[0,1,2,0,1,0,1,3,3,1,0,1,0,3,1,2].forEach((v,n)=>o+=R(2+n%4*3.200,2+(n>>2)*3.200,3.300,3.300,k[v]));return o})(),
book:R(2,1.500,13,13,'#dcdcdc','#aaa',1)+S('M5 1.500v13','#fff')+F('M9.500 1h3v8L11 7.500 9.500 9z','#5f87b8'), projhome:folder('#b5d957','#8a9a50')+S('M3 12l9-7M3 5l6 4','#eef7c8',1.200)+C(11,6,2.300,'#1d8a18'),
homef:folder('#f4f4f4','#909090')+S('M4.500 8.500L8 5l3.500 3.500M6 8v4h4V8','#444',1,), fold:folder('#f0f0f0','#909090'),
pg:S('M2 1.500h4l2 1 3-1h3l1.500 3-1 4-3 1v5H8V10L5.500 9.500 4 13 1.500 8 1 4z',BD,1,B)+S('M6 3v5M10.500 3q2 3 0 6',BD,.9),
hana:R(3,3,10,10,B)+R(1,1,14,14,'none',BD).replace('/>',' stroke-dasharray="1 1.500"/>'), mssql:S('M1 1Q9 0 13 6l2 3Q7 8 1 14 5 7 1 1z',BD,.8,B)+S('M5 1.500q3 4 1.500 8.500M9 2.500q2.500 3 2 6.500',BD,.9),
oracle:R(1,3,14,10,B,BD,4).replace('/>',' stroke-width="2"/>'), wms:C(8,8,7,'#c3d6ec','#6d8fb5')+land('#4e7096'), vt:R(2,2,12,12,'#fff')+S('M2.500 2v12M6.200 2v12M9.800 2v12M13.500 2v12M2 2.500h12M2 6.200h12M2 9.800h12M2 13.500h12','#41506a',1.500),
xyz:[0,1,2].map(a=>[0,1,2].map(b=>R(1.500+a*5,1.500+b*5,3.500,3.500,B)).join('')).join(''), wcs:globe(B,'#2c4a6b')+R(4.500,6,7,4,'#b9d0ea',BD), wfs:globe('#eef4fb','#a9c3de')+C(8,8,7.200,'none','#6d97c4')+S('M4.500 3.500L8 12l2.500-8',BD,1.300),
arc:globe('#eef4fb','#a9c3de')+C(8,8,7.200,'none','#6d97c4')+F('M2 4l4-2 3 2-3 3v4l-3-3zM3 9l5 2-2 4zM10 4l2 1-3 6z','#3b4a5c'),
mag:C(6.500,6.500,4.200,'none','#999',1.300)+S('M9.500 9.500L14 14','#999',1.600),
toggle:`<g transform="rotate(-25 8 8)">${R(5,4,6,10,'#fff','#333',3)+S('M8 4v4M5 8h6M2 5l2 2M14 5l-2 2M2 11h2M12 11h2M8 0v3','#333',1.100)}</g>`,
lock:R(3,7,10,8,'#666','#555',1)+S('M5 7V4q0-2.500 3-2.500T11 4v3','#777',1.600), globeg:globe('#e0e0e0','#777'), msg:S('M8 2q7 0 7 5t-5 5l1 3-4-3Q1 12 1 7t7-5z','#555',.5,'#5c5c5c')+C(5,7,1,'#fff')+C(8,7,1,'#fff')+C(11,7,1,'#fff'),
grad:R(2,2,10.500,3,'#ffd400','#e8a800')+R(4,7,10.500,3,'#ff5a00','#d03800')+R(2,12,10.500,3,'#b80000','#800'), eps:T('ε',3.500,12.500,16,'#5a3a70','font-weight="bold"'),
clr:F('M1 8l4-5h8v10H5z','#999')+S('M6 5.500l4.500 5M10.500 5.500l-4.500 5','#fff',1.200), eqint:R(.5,2.500,14.500,11,'#fff','#c9b400')+S('M3 3v10M10 3v10','#6d97c4')+S('M5.500 5v7M8.500 9v3M13 6v6','#111',1.600).replace('/>',' stroke-dasharray="1.800 1"/>'),
plus:S('M6 2h4v4h4v4h-4v4H6v-4H2V6h4z','#3f8a4a',1.200,'#eaf5ea')+S('M8 3.500v9M3.500 8h9','#5a9a5a',1.300), minus:R(1.500,5.500,13,5,'#fff','#e83c3c')+S('M3 8h10','#f06a6a',2.400)
};
/* side-navigation icons, 24px */
const N={
Information:C(8,8,7.600,B,'#8fb4e0',.8)+T('i',5.800,13,14,'#fff','font-weight="bold" font-style="italic" style="font-family:Liberation Serif"'),
Source:gearp('#e0e0e0',9.500,8.500,6.500)+C(9.500,8.500,4,B,'#41618a',.8)+S('M8.500 8.500l6 5.500','#6a5a28',4)+S('M8.500 8.500l5.600 5.200','#efe08a',2.800)+S('M8 8.500L5 5','#eee',2.600)+S('M.5 4.500q3 2.500 5 .5T4 .8','#eee',2.200),
Symbology:F('M1 5.500l6-4 5 5-5 8-6-1z','#f9dc5c')+F('M0 9l4-1 3 6-6-1z','#e44')+F('M1 6l4-2 2 4-5 2z','#86a9d8')+S('M7.500 11l4.500-4','#b98237',6.500)+S('M7.500 11l4.500-4','#dba862',5.200)+S('M12 6.500L16.500 1','#c8893a',2.200),
Labels:S('M3.500 4h12v8h-12L.8 8z','#b99a00',.7,'#fbe646')+T('abc',3.900,9.800,6,'#333','font-weight="bold"'),
Masks:R(-.5,3.500,17,8,'#eaf2fc','none',4)+T('abc',1,10.300,8,'#333','font-weight="bold"'),
'3D View':S('M1 4l7-4 7 4-7 4z','#a81818',1,'#f79090')+S('M1 4l7 4v8l-7-4.500z','#3a9a10',1,'#8fe03a')+S('M15 4L8 8v8l7-4.500z','#b89a00',1,'#ffee5a'),
Diagrams:I.diag,
Fields:R(.5,.5,15,15,'#e6ecf4','#7f9fc8')+R(1,1,14,3,'#8fb7d8')+S('M2 6h12M2 8.500h12M2 11h12M2 13.500h12','#8a93a0',.8)+R(3.500,0,4,16,'#f3eaa6','#f5dc2a'),
'Attributes Form':R(.5,.5,15,15,'#d8e2ee','#7f9fc8')+R(7,3,6.500,3.500,'#fff','#5f83ad')+R(7,9,6.500,3.500,'#fff','#5f83ad')+S('M2.500 5h3M2.500 11h3','#555',1.200),
Joins:F('M15.500 1v14L4 8z','#5f93cf')+F('M15.500 8v7L4 8z','#3f6ba3')+C(1.500,8,1.800,B),
'Auxiliary Storage':S('M6 0h7l3 3v12H6z','#ccc',.5,'#fff')+S('M13 0v3h3','#999',.6)+S('M0 5v8q0 2 5 2t5-2V5','#555',.6,'#a9a9a9')+`<ellipse cx="5" cy="5" rx="5" ry="1.800" fill="#d5d5d5" stroke="#666" stroke-width=".6"/>`+S('M0 8.500q0 1.800 5 1.800t5-1.800M0 12q0 1.500 5 1.500t5-1.500','#eee',.8),
Actions:gearp('#e5e5e5',9.500,6.500,6.800)+C(9.500,6.500,4.300,B,'#41618a',.8)+F('M8 4.200l4 2.300-4 2.300z','#fff')+gearp('#ddd',2.500,13.500,2.800)+C(2.500,13.500,1.600,B),
Display:S('M3 .8h10q2 0 2 2.500v4q0 2.500-2 2.500H9L5 13.500 6 9.800H3Q1 9.800 1 7.300v-4Q1 .8 3 .8z','#c9b45a',.7,'#eadf94'),
Rendering:S('M3.500 13L10 7','#d99a4c',6)+S('M2 11l4 4M4 9.500l4 4','#f0c78a',.6)+S('M9.500 7.500L15 1','#d0923c',1.800),
Temporal:C(8,8,7.500,'#f2f2f2','#ccc',.8)+S('M8 3v5.200l3.200 2.400','#666',1)+S('M8 1v1M8 14v1M1 8h1M14 8h1M3 3l.7.7M13 3l-.7.7M3 13l.7-.7M13 13l-.7-.7','#5f87b8',.9),
Variables:T('ε',3,13.500,19,'#5f3f72','font-weight="bold"'),
Elevation:R(10,1,5.500,10,'#f5dc00','#d8bd00')+R(.5,11,5,4.500,'#ffd92a','#c9a900')+S('M7.500 13V3M4.500 13h7','#222',1.600)+F('M4.500 4.500L7.500 0l3 4.500z','#333'),
Metadata:S('M2 .5h12v15H2z','#ccc',.5,'#fff')+S('M4 5h8M4 7.500h8M4 10h8M4 12.500h6','#aaa',.8)+S('M9.500 11L15 2.500','#e8682a',2.600)+F('M8 13l.8-3 2 1.300z','#777'),
Dependencies:R(1.500,.5,9,9,'#eee','#aaa')+R(8,6,7,9.500,'#f5f5f5','#aaa')+S('M9 2.500h4v4','#8fb4ee',2.500)+F('M10 6.500h6l-3 4z','#7ba6e8')+S('M7 14.500H3v-4','#6b97dc',2.500)+F('M0 10.500h6l-3-4z','#6b97dc'),
};
const svg=s=>`<svg class="ic" viewBox="0 0 16 16">${s}</svg>`;
const check='<svg width="12" height="12" viewBox="0 0 12 12"><path d="M2.500 6L5 9.500 9.500 1.500" fill="none" stroke="#000" stroke-width="1.800"/></svg>';
document.querySelectorAll('[data-tools]').forEach(b=>{
  b.innerHTML=b.dataset.tools.split(' ').map(t=>{
    const dim=t.endsWith('~')?' dim':'';const on=t.endsWith('!')?' on':'';t=t.replace(/[~!]/,'');
    if(t==='['||t==='|')return `<span class="grip d-flex justify-content-end${t==='['?' first':''}"><i></i></span>`;
    if(t==='-')return '<span class="sepr d-flex justify-content-center"><i></i></span>';
    if(t==='v')return `<span class="caret d-flex justify-content-center align-items-center${dim}"><i class="tri"></i></span>`;
    return `<span class="tb d-flex justify-content-center align-items-center${on}${dim}">${svg(I[t])}</span>`}).join('')});
document.querySelectorAll('[data-i]').forEach(e=>e.innerHTML=svg(I[e.dataset.i]));
const put=(el)=>el.querySelectorAll('[data-ck]').forEach(e=>e.innerHTML=`<div class="ck">${e.dataset.ck==='1'?check:''}</div>`);
document.querySelectorAll('[data-spin]').forEach(e=>{e.className+=' spinner d-flex flex-column align-items-center justify-content-center';e.innerHTML='<i class="tri up sm"></i><i class="tri sm"></i>'});
browserTree.innerHTML=[['starf','Favorites'],['book','Spatial Bookmarks',1],['projhome','Project Home',1],['homef','Home',1],['fold','C:\\ (Windows-SSD)',1],['fold','D:\\ (Data)',1],['gpkg','GeoPackage'],['feather','SpatiaLite'],['pg','PostgreSQL'],['hana','SAP HANA'],['mssql','MS SQL Server'],['oracle','Oracle'],['wms','WMS/WMTS'],['vt','Vector Tiles'],['xyz','XYZ Tiles',1],['wcs','WCS'],['wfs','WFS / OGC API - Features'],['arc','ArcGIS REST Servers']]
 .map(r=>`<div class="trow d-flex align-items-center"><span class="twist">${r[2]?'<i class="tri rt d-block"></i>':''}</span>${svg(I[r[0]])}<span style="margin-left:7px;padding-top:2px">${r[1]}</span></div>`).join('');
nav.innerHTML=Object.keys(N).map(k=>`<div class="navitem d-flex align-items-center${k==='Symbology'?' sel':''}">${svg(N[k])}<span class="ms-2" style="padding-top:2px">${k}</span></div>`).join('')+`<div class="navitem d-flex pt-2">${svg(R(1,-1,4,5,'#ffd400','#c98a00')+R(7,1,5,3,'#999'))}</div>`;
const K=['#ca0020','#dd494c','#ef9277','#f5b8a0','#f6e2da','#e1ebf0','#b1d5e7','#7ebada','#4596c7','#0571b0'];
const V=['26146,00 - 108190,20','108190,20 - 190234,40','190234,40 - 272278,60','272278,60 - 354322,80','354322,80 - 436367,00','436367,00 - 518411,20','518411,20 - 600455,40','600455,40 - 682499,60','682499,60 - 764543,80','764543,80 - 846588,00'];
const L=['26146 - 108190','108190 - 190234','190234 - 272279','272279 - 354323','354323 - 436367','436367 - 518411','518411 - 600455','600455 - 682500','682500 - 764544','764544 - 846588'];
classes.innerHTML=V.map((v,n)=>`<div class="crow d-flex align-items-center"><span class="c1 d-flex align-items-center" style="padding-left:3px"><span data-ck="1"></span><i class="lsw" style="margin-left:6px;background:${K[n]}"></i></span><span class="c2" style="padding-left:3px">${v}</span><span style="padding-left:6px">${L[n]}</span></div>`).join('');
put(document);

/* ---------- map ---------- */
let seed=7;const rnd=()=>(seed=(seed*16807)%2147483647)/2147483647;
const pt=(s,o)=>s.trim().split(/\s+/).map(p=>{const[a,b]=p.split(',').map(Number);return[o.x+a/o.k,o.y+b/3]});
const U={x:420,y:134.5,k:2.306},D={x:420,y:559.5,k:2.306},Z={x:1080,y:880,k:1.867};
function wig(p,amp){const o=[p[0]];for(let i=1;i<p.length;i++){const[a,b]=p[i-1],[c,d]=p[i];const l=Math.hypot(c-a,d-b),n=Math.max(1,Math.round(l/4.500));
 for(let j=1;j<n;j++){const r=(rnd()-.5)*2*amp;o.push([a+(c-a)*j/n-(d-b)/l*r,b+(d-b)*j/n+(c-a)/l*r])}o.push([c,d])}return o}
const dd=p=>'M'+p.map(q=>q[0].toFixed(1)+' '+q[1].toFixed(1)).join('L');
let m='';
const W='#aad3df';
const area=(s,o,f=W)=>m+=`<path d="${dd(wig(pt(s,o),.9))}Z" fill="${f}"/>`;
const ln=(s,o,c,w,a=1)=>m+=`<path d="${dd(wig(pt(s,o),a))}" fill="none" stroke="${c}" stroke-width="${w}" stroke-linejoin="round" stroke-linecap="round"/>`;
area('425,8 415,45 395,75 365,125 355,120 330,133 300,132 275,145 262,165 245,190 228,212 218,262 205,280 190,272 155,268 135,290 128,330 112,360 107,400 108,440 100,472 75,500 40,522 8,525 8,540 50,535 85,512 120,458 140,450 143,400 160,338 180,355 215,368 240,358 320,362 340,340 362,335 382,330 380,315 365,300 400,290 440,270 480,255 482,240 472,210 480,180 495,210 515,235 545,232 570,205 575,180 600,175 605,150 640,130 655,115 645,75 630,65 620,90 600,105 575,120 535,128 520,95 512,50 530,35 545,8',U);
area('693,8 705,45 740,85 775,103 810,107 860,95 873,60 870,30 862,8',U);
area('887,8 905,60 918,100 925,140 910,180 905,225 920,255 945,275 940,320 938,350 948,370 947,320 958,285 985,282 1000,278 975,262 955,250 935,220 937,195 960,180 1000,152 1080,145 1090,115 1110,92 1140,80 1210,90 1260,85 1310,105 1370,125 1440,115 1490,112 1520,140 1518,158 1500,150 1480,165 1462,170 1460,200 1465,270 1480,300 1510,310 1560,330 1560,8',U);
m+=`<rect x="1912" y="138" width="9" height="172" fill="${W}"/>`;
area('1488,170 1500,180 1502,215 1492,225 1490,200 1480,195',U,'#f2efe9');
area('497,430 510,425 524,440 522,475 508,482 495,470',U);area('527,410 540,405 542,430 530,440',U);area('1412,130 1428,130 1426,158 1415,160',U);area('1490,585 1520,590 1525,600 1500,612',U);area('645,540 656,540 655,558 646,556',U);
area('795,298 808,298 806,308 797,308',U);area('1088,765 1102,768 1100,780 1088,778',U);area('240,580 255,585 248,598',U);area('510,515 528,520 520,540',U);
area('8,645 38,645 38,660 20,678 8,678',U,'#b5d6a7');area('635,985 655,988 652,997 636,996',U,'#bcdab0');
area('968,215 990,188 1010,190 1015,180 1050,200 1050,212 1000,220',D,'#bcdab0');area('1060,150 1095,125 1085,145',D,'#bcdab0');
/* clusters of small lakes: centre, spread, count, size */
[[495,370,45,60,90,2],[480,450,28,60,50,2.500],[545,470,12,70,30,3],[510,530,40,45,60,2],[820,390,60,45,80,1.500],[850,310,25,50,40,2.500],[60,440,50,70,50,1.500],[180,400,35,45,40,2],[50,360,50,35,30,1.500],[1020,380,60,90,60,1.500],[960,420,30,35,30,2.500],[1150,110,50,40,50,2],[1270,150,70,60,60,3],[1370,240,70,50,60,2.500],[1380,160,70,30,25,2.500],[1200,490,60,50,50,1.500],[1360,530,90,60,90,2.500],[1440,670,10,50,18,2],[1500,1110,45,70,60,2.500],[1350,1200,60,50,60,2],[1500,1220,60,60,60,2],[1400,1250,60,50,40,1.500],[720,1050,70,60,110,2],[760,1130,40,100,110,2],[690,1120,40,45,40,2],[920,280,20,30,20,3],[870,250,60,40,30,1.500],[190,120,180,70,14,2],[760,240,120,80,12,2],[90,1100,60,15,12,2],[560,1160,30,30,12,2],[1030,450,60,60,20,1.500],[1280,1340,60,40,20,1.500]].forEach(([x,y,rx,ry,n,s])=>{for(let i=0;i<n;i++){const a=rnd()*6.28,q=Math.sqrt(rnd());m+=`<ellipse cx="${(420+(x+Math.cos(a)*q*rx)/2.306).toFixed(1)}" cy="${(135+(y+Math.sin(a)*q*ry)/3).toFixed(1)}" rx="${(.3+rnd()*s*.4).toFixed(1)}" ry="${(.3+rnd()*s*.5).toFixed(1)}" fill="${W}"/>`}});
for(let i=0;i<45;i++){m+=`<rect x="${(470+rnd()*48).toFixed(1)}" y="${(975+rnd()*25).toFixed(1)}" width="${(.6+rnd()*2).toFixed(1)}" height="${(.6+rnd()*1.500).toFixed(1)}" fill="${W}" opacity=".8"/>`}
area('170,1260 190,1262 190,1278 175,1275',D);
/* thin natural streams */
['165,15 185,50 230,75 240,120 265,160','10,165 50,140 70,108 130,98 170,125 230,125 265,155','940,330 890,320 860,360 820,390','100,480 125,500 130,560','575,1045 520,1080 505,1065 490,1065 480,1120','640,990 575,1045','1200,470 1240,485'].forEach(s=>ln(s,U,'#b4d8e2',1,1.300));
['130,450 160,480 210,505 240,515 260,500 300,545 350,580 370,620 410,615 435,680 480,665 530,680 525,710 575,770 620,805 625,870 610,890 628,950 630,990','125,455 170,470 200,495 240,505','650,990 690,1000 730,1060 765,1100 775,1180 780,1220','985,270 1010,290 1045,340 1080,355 1085,400 1105,450 1150,440 1200,470'].forEach(s=>ln(s,U,W,1.300,1.300));
ln('130,450 170,485 230,510 260,500 300,530',U,W,2.200);ln('935,520 930,590 960,620 1010,640 1040,680 1010,710 960,750 945,790',U,W,2.500,.6);ln('975,870 1010,905 1020,940',U,W,2);
/* administrative borders */
['720,8 690,40 660,60 645,95 665,115 690,150 650,180 630,240 575,260 590,285 615,300 622,330 597,360 597,375 648,375 640,420 635,440 650,480 628,500 630,580 645,620 655,660 690,670 698,700 668,725 670,755 700,780 735,785 745,840 760,870 780,878','785,1230 830,1270 855,1290 870,1300 870,1320 848,1350','968,8 982,55 1035,50 1070,12','1320,10 1350,20 1400,22 1480,10 1545,40'].forEach(s=>ln(s,U,'#c9b3c6',1.100,1));
ln('780,878 781,1000 785,1230',U,'#c9b3c6',1.100,0);ln('25,885 35,930 110,1170 105,1332',D,'#cdbccb',1.100,0);
ln('848,75 855,100 840,110 815,150 797,122 780,165 720,190 710,220 640,255 605,270 600,295 557,325 552,380 555,410 577,435 540,440 485,462 487,500 450,535 455,600 478,625 458,660 447,745 430,755 397,745 393,712 350,715 312,702 280,735 268,785 205,800 120,848 90,842 72,817 50,875 25,885',D,'#c9b3c6',1.100,1.300);
/* south-eastern corner */
area('720,40 736,40 734,110 743,200 741,250 733,350 705,370 720,310 725,250 733,210 728,140',Z);
[[ '112,40 70,60 42,85 42,108 72,100 85,140 110,135 128,165 132,125 145,120 172,140 172,168 150,175 147,215 135,238 112,210 98,225 85,210 88,240 65,245 70,262 90,240 94,300 75,350 65,370'],['0,300 20,320 40,370'],['690,370 715,310']].forEach(s=>ln(s[0],Z,W,1.200,.6));
area('1180,40 1370,45 1405,120 1408,210 1370,260 1360,340 1330,370 1090,372 1120,345 1195,330 1180,250 1200,210 1165,130',Z,'#f2e7e0');
['1275,60 1270,200 1240,240','1210,300 1290,370','1340,80 1400,110','1190,200 1240,215','1290,120 1350,170','1260,360 1330,300','1170,110 1230,130','1310,220 1390,240','1180,160 1240,170','1330,140 1405,190','1200,270 1240,290','1150,340 1220,365','1300,330 1360,290'].forEach(s=>ln(s,Z,'#f2efe9',2));
area('1498,178 1512,180 1522,205 1505,210',Z,'#b5d6a7');
for(let i=0;i<70;i++){m+=`<rect x="${(1446+rnd()*56).toFixed(1)}" y="${(895+rnd()*105).toFixed(1)}" width="1.200" height="${(.6+rnd()*2.500).toFixed(1)}" fill="${W}" opacity=".8"/>`}
for(let i=0;i<18;i++){m+=`<rect x="${(1850+rnd()*30).toFixed(1)}" y="${(930+rnd()*18).toFixed(1)}" width="1.500" height="1.200" fill="${W}"/>`}
/* ranked rivers: class index, frame, route */
[
[4,U,'1163,1255 1190,1240 1240,1255 1280,1265 1310,1265 1318,1300 1305,1350'],[4,U,'1320,1175 1350,1195 1375,1205 1390,1250 1450,1250 1475,1240 1505,1245 1513,1310'],[4,U,'1368,1060 1362,1015 1335,1020 1320,1060 1318,1130 1320,1175'],[4,U,'1440,1030 1415,1022 1400,1050 1405,1130 1400,1180 1382,1220 1395,1255 1370,1280 1355,1350'],[4,U,'1458,1108 1472,1180 1455,1235'],[4,U,'1280,1265 1265,1300 1272,1350'],[4,U,'1390,1250 1405,1300 1405,1345'],
[4,D,'1272,0 1270,80 1255,95 1210,95 1180,105 1145,140 1085,122 1035,150 1015,182 975,195'],[4,D,'1310,0 1305,80 1320,130 1320,180 1330,220'],[4,D,'1365,0 1360,60 1330,125'],[4,D,'817,198 855,200 862,230 862,270 880,290 920,285 955,262'],[4,D,'862,270 845,320 855,375 835,390 838,425'],[4,D,'955,262 952,320 965,390 968,470 1015,522'],
[5,D,'922,75 905,68 880,115 885,165 852,185 855,200'],[5,D,'603,443 620,428 680,425 720,432 780,392 800,415 838,425 845,480 858,500 850,542 865,580 882,635'],[5,D,'720,432 680,440 640,470 620,475 610,500 625,515'],[5,D,'758,545 795,555 850,542'],[5,D,'858,500 930,525 980,565 1010,585'],[5,D,'1015,522 1050,545 1055,580 1060,650 1078,720 1110,780 1160,815'],[5,D,'1055,565 1090,530 1120,500 1140,432'],[5,D,'1060,600 1100,595 1132,568 1162,585'],[5,D,'1010,725 1030,770 1060,742 1095,745'],[5,D,'1405,70 1430,75 1450,110 1480,135 1525,130 1510,90'],[5,D,'1405,70 1388,140 1410,200 1440,235 1500,225 1545,240'],[5,D,'1485,230 1475,260 1455,270 1453,312'],
[6,D,'1015,515 1030,460 1060,400 1100,345 1130,310 1150,268 1190,265 1230,230 1270,205 1282,220 1278,242'],[6,D,'1315,285 1328,283 1328,250 1295,243 1280,285 1220,330 1210,360 1150,385 1140,432 1200,425 1260,418 1310,400 1328,360 1328,295'],[6,D,'1453,312 1420,320 1390,375 1360,395 1350,430'],[6,D,'1453,312 1450,340 1440,350 1445,380'],[6,D,'637,500 650,487 690,485 712,460 740,478 752,510 750,530 758,547 735,570 712,583 675,570 645,530 622,513'],[6,D,'665,665 695,665 715,640 780,652 805,688 860,690 898,685 898,665 880,645 900,640 930,652 1015,655 1030,692'],[6,D,'1165,655 1165,680 1152,710 1155,780 1162,815 1205,852 1250,825 1300,768 1280,745 1270,650'],[6,D,'1205,852 1205,875 1250,935 1265,992'],[6,D,'1118,788 1102,788 1105,850 1120,890 1120,930 1140,948 1180,950 1215,975 1235,1020 1240,1065'],[6,D,'1140,948 1115,970 1085,965 1075,1040 1090,1085'],
[7,D,'1512,235 1535,290 1542,385'],[7,D,'1297,467 1280,462 1268,475 1273,540 1285,570 1270,600 1270,655 1232,690 1200,655 1210,565'],[7,D,'592,475 583,463 520,478 520,505 528,518 560,525 580,550 615,560 632,580 632,600 645,620 648,650 668,652 655,670 650,690 635,720 655,740 650,770 625,772 610,792 600,785'],[7,D,'528,518 515,525 495,570 495,605 483,635'],[7,D,'500,560 540,602 557,612'],[7,D,'520,740 550,765 580,765 600,780'],[7,D,'1090,1085 1093,1140 1085,1185 1045,1237 982,1225'],[7,D,'1240,1065 1232,1100 1190,1155 1160,1158 1130,1132'],[7,D,'1240,1065 1248,1110 1225,1160'],
[8,D,'485,650 500,643 528,650 525,710 520,740 470,708 472,645'],[8,D,'600,785 575,800 570,820 530,838 515,862 475,885 440,885 435,905 400,915 365,925'],[8,D,'830,915 855,975 880,1030 888,1110 910,1150 965,1200 990,1180 1050,1160 1080,1100 1090,1085 1080,1100 1030,1118 1005,1105 960,1095 930,1030 922,980 893,927'],
[9,D,'50,878 45,925 70,940 92,963 115,965 125,938 150,915 195,890 200,905 260,915 275,928 320,935 340,952 362,948 362,930 345,938 333,925 330,880 310,820 305,790 318,740 320,710'],[9,D,'263,810 240,808 228,830 225,860 218,875 220,905'],
[3,U,'945,990 945,1005 930,1020 935,1060 960,1102 990,1095 1025,1080'],[3,U,'908,1135 940,1185 965,1203 1012,1203'],[3,U,'1035,1050 1085,1045 1100,1090 1150,1125 1190,1170 1230,1178 1255,1170 1260,1160 1285,1157 1300,1165 1310,1185 1320,1175'],[3,U,'1255,1170 1275,1190 1268,1235 1278,1262'],[3,U,'1012,1203 1005,1250 1000,1290 993,1315 1003,1350'],[3,U,'1007,1255 1025,1240 1075,1268 1110,1253 1145,1270 1180,1290 1195,1325 1185,1350'],
[3,D,'1142,0 1180,15 1195,50 1183,80'],[3,D,'1003,0 993,40 1003,60 1000,135 985,165 968,210 955,260'],[3,D,'1000,110 1015,95 1050,90 1095,43 1120,45'],
[2,U,'948,778 945,800 925,832 890,843 858,870 850,905 862,945 857,952'],[2,U,'972,875 950,895 940,940 905,965 890,990 850,1007 835,990 848,967'],[2,U,'1022,940 1022,995 1035,1015 1055,1008 1067,1020 1060,1040 1035,1050 1030,1075 1022,1085 1020,1160 1012,1203'],[2,U,'1037,1060 1060,1110 1068,1160 1083,1185 1078,1202 1063,1203'],[2,U,'1217,767 1190,755 1160,740 1120,755 1112,800 1150,798 1195,805 1223,797'],[2,U,'1112,800 1130,808 1135,835 1145,850 1135,880 1150,920 1145,980 1127,1020'],[2,U,'1150,798 1158,835 1190,842 1200,858 1210,850'],
[1,U,'707,780 710,735 735,700 755,650 785,648 793,660 788,700 795,720 780,770 760,797'],[1,U,'735,832 755,815 768,822 790,808 805,770 835,735 835,710 852,685 850,625 843,612'],[1,U,'853,827 890,800 910,740 940,680 943,650 962,632'],[1,U,'1035,675 1055,675 1070,690 1110,697 1117,715 1097,752'],[1,U,'1030,700 1010,735 1027,760 1025,798 1060,832 1080,803 1112,802'],[1,U,'1025,705 1010,710 1000,735 960,765 950,800 958,835 970,838 970,870 1022,928 1025,950 1037,967'],[1,U,'1022,708 1005,720 985,750 955,770 962,800 970,840'],
[0,U,'950,380 953,390 945,420 943,485 935,490 912,520 908,540 915,570 920,600 940,620 960,632 1000,642 1020,660 1035,680 1030,700 1022,706'],[0,U,'943,485 935,510 915,520 908,530'],[0,U,'908,540 922,560 915,570'],[0,U,'920,595 935,600 937,612'],[0,U,'908,530 885,552 875,567 850,575 843,612 818,625 808,643 785,650']
].forEach(([c,o,s])=>ln(s,o,K[c],c===0||c===9?2.700:2.500,.8));
map.innerHTML=m;
</script>
</body>
</html>
